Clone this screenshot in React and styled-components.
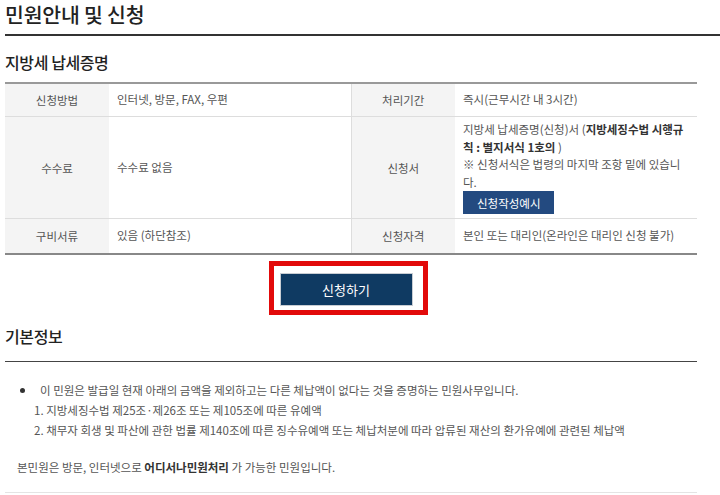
import styled, { createGlobalStyle } from 'styled-components'

const Global = createGlobalStyle`
  body {
    margin: 0;
    background: #fff;
    font-family: "Noto Sans CJK KR", "Noto Sans", sans-serif;
    color: #333;
  }
`

const Page = styled.div`
  width: 720px;
  padding-left: 5px;
  box-sizing: border-box;
`

const Title = styled.h1`
  margin: 0;
  height: 34px;
  font-size: 20.5px;
  font-weight: 500;
  line-height: 28px;
  color: #222;
  letter-spacing: -0.2px;
  border-bottom: 2px solid #333;
`

const Content = styled.div`
  width: 692px;
`

const SubTitle = styled.h2`
  margin: 0;
  padding: 14px 0 0;
  height: 32px;
  font-size: 16px;
  font-weight: 500;
  line-height: 24px;
  color: #222;
  letter-spacing: -0.4px;
  box-sizing: content-box;
`

const Table = styled.table`
  width: 100%;
  border-collapse: collapse;
  border-top: 2px solid #999;
  border-bottom: 2px solid #888;
  font-size: 11.5px;
  color: #555;
  table-layout: fixed;
`

const Th = styled.th`
  background: #f4f4f4;
  font-weight: 400;
  text-align: center;
  border-bottom: 1px solid #ddd;
  border-left: ${(p) => (p.$first ? 'none' : '1px solid #ddd')};
  padding: 0;
  height: ${(p) => p.$h || 32}px;
`

const Td = styled.td`
  padding: 4px 8px;
  border-bottom: 1px solid #ddd;
  line-height: 17.5px;
  vertical-align: middle;
  letter-spacing: 0;

  b {
    font-weight: 700;
    color: #333;
  }
`

const SmallBtn = styled.button`
  display: block;
  margin-top: 0;
  height: 23px;
  padding: 0 14px;
  border: none;
  background: #234a80;
  color: #fff;
  font-family: inherit;
  font-size: 11.5px;
`

const BtnRow = styled.div`
  display: flex;
  justify-content: center;
  padding-top: 6px;
  margin-left: -6px;
`

const Highlight = styled.div`
  border: 5px solid #e20a0a;
  padding: 7px 10px 4px 6px;
`

const MainBtn = styled.button`
  width: 133px;
  height: 33px;
  border: 1px solid #c8cdd3;
  background: #0f3a62;
  color: #fff;
  font-family: inherit;
  font-size: 13px;
`

const Section = styled.h2`
  margin: 0;
  padding-top: 8px;
  height: 38px;
  font-size: 16px;
  font-weight: 500;
  line-height: 26px;
  color: #222;
  letter-spacing: -0.4px;
  border-bottom: 1px solid #444;
`

const List = styled.ul`
  margin: 0;
  padding: 18px 0 0 12px;
  list-style: none;
  font-size: 11.5px;
  color: #555;
  letter-spacing: 0;
`

const Bullet = styled.li`
  display: flex;
  align-items: center;
  height: 20px;

  &::before {
    content: '';
    width: 5px;
    height: 5px;
    border-radius: 50%;
    background: #333;
    margin: 0 15px 0 3px;
  }
`

const Numbered = styled.li`
  height: 20px;
  line-height: 20px;
  padding-left: 17px;
`

const Note = styled.p`
  margin: 0;
  padding: 18px 0 0 12px;
  height: 34px;
  font-size: 11.5px;
  line-height: 18px;
  color: #555;
  letter-spacing: 0;
  border-bottom: 1px solid #e4e4e4;
  box-sizing: content-box;

  b {
    font-weight: 700;
    color: #333;
  }
`

export default function App() {
  return (
    <Page>
      <Global />
      <Title>민원안내 및 신청</Title>
      <Content>
        <SubTitle>지방세 납세증명</SubTitle>
        <Table>
          <colgroup>
            <col style={{ width: 104 }} />
            <col style={{ width: 242 }} />
            <col style={{ width: 104 }} />
            <col style={{ width: 242 }} />
          </colgroup>
          <tbody>
            <tr>
              <Th $first>신청방법</Th>
              <Td>인터넷, 방문, FAX, 우편</Td>
              <Th>처리기간</Th>
              <Td>즉시(근무시간 내 3시간)</Td>
            </tr>
            <tr>
              <Th $first $h={101}>수수료</Th>
              <Td>수수료 없음</Td>
              <Th>신청서</Th>
              <Td>
                지방세 납세증명(신청)서 (<b>지방세징수법 시행규칙 : 별지서식 1호의</b> )
                <br />※ 신청서식은 법령의 마지막 조항 밑에 있습니다.
                <SmallBtn>신청작성예시</SmallBtn>
              </Td>
            </tr>
            <tr>
              <Th $first $h={34}>구비서류</Th>
              <Td>있음 (하단참조)</Td>
              <Th>신청자격</Th>
              <Td>본인 또는 대리인(온라인은 대리인 신청 불가)</Td>
            </tr>
          </tbody>
        </Table>
        <BtnRow>
          <Highlight>
            <MainBtn>신청하기</MainBtn>
          </Highlight>
        </BtnRow>
        <Section>기본정보</Section>
        <List>
          <Bullet>이 민원은 발급일 현재 아래의 금액을 제외하고는 다른 체납액이 없다는 것을 증명하는 민원사무입니다.</Bullet>
          <Numbered>1. 지방세징수법 제25조·제26조 또는 제105조에 따른 유예액</Numbered>
          <Numbered>2. 채무자 회생 및 파산에 관한 법률 제140조에 따른 징수유예액 또는 체납처분에 따라 압류된 재산의 환가유예에 관련된 체납액</Numbered>
        </List>
        <Note>
          본민원은 방문, 인터넷으로 <b>어디서나민원처리</b> 가 가능한 민원입니다.
        </Note>
      </Content>
    </Page>
  )
}
